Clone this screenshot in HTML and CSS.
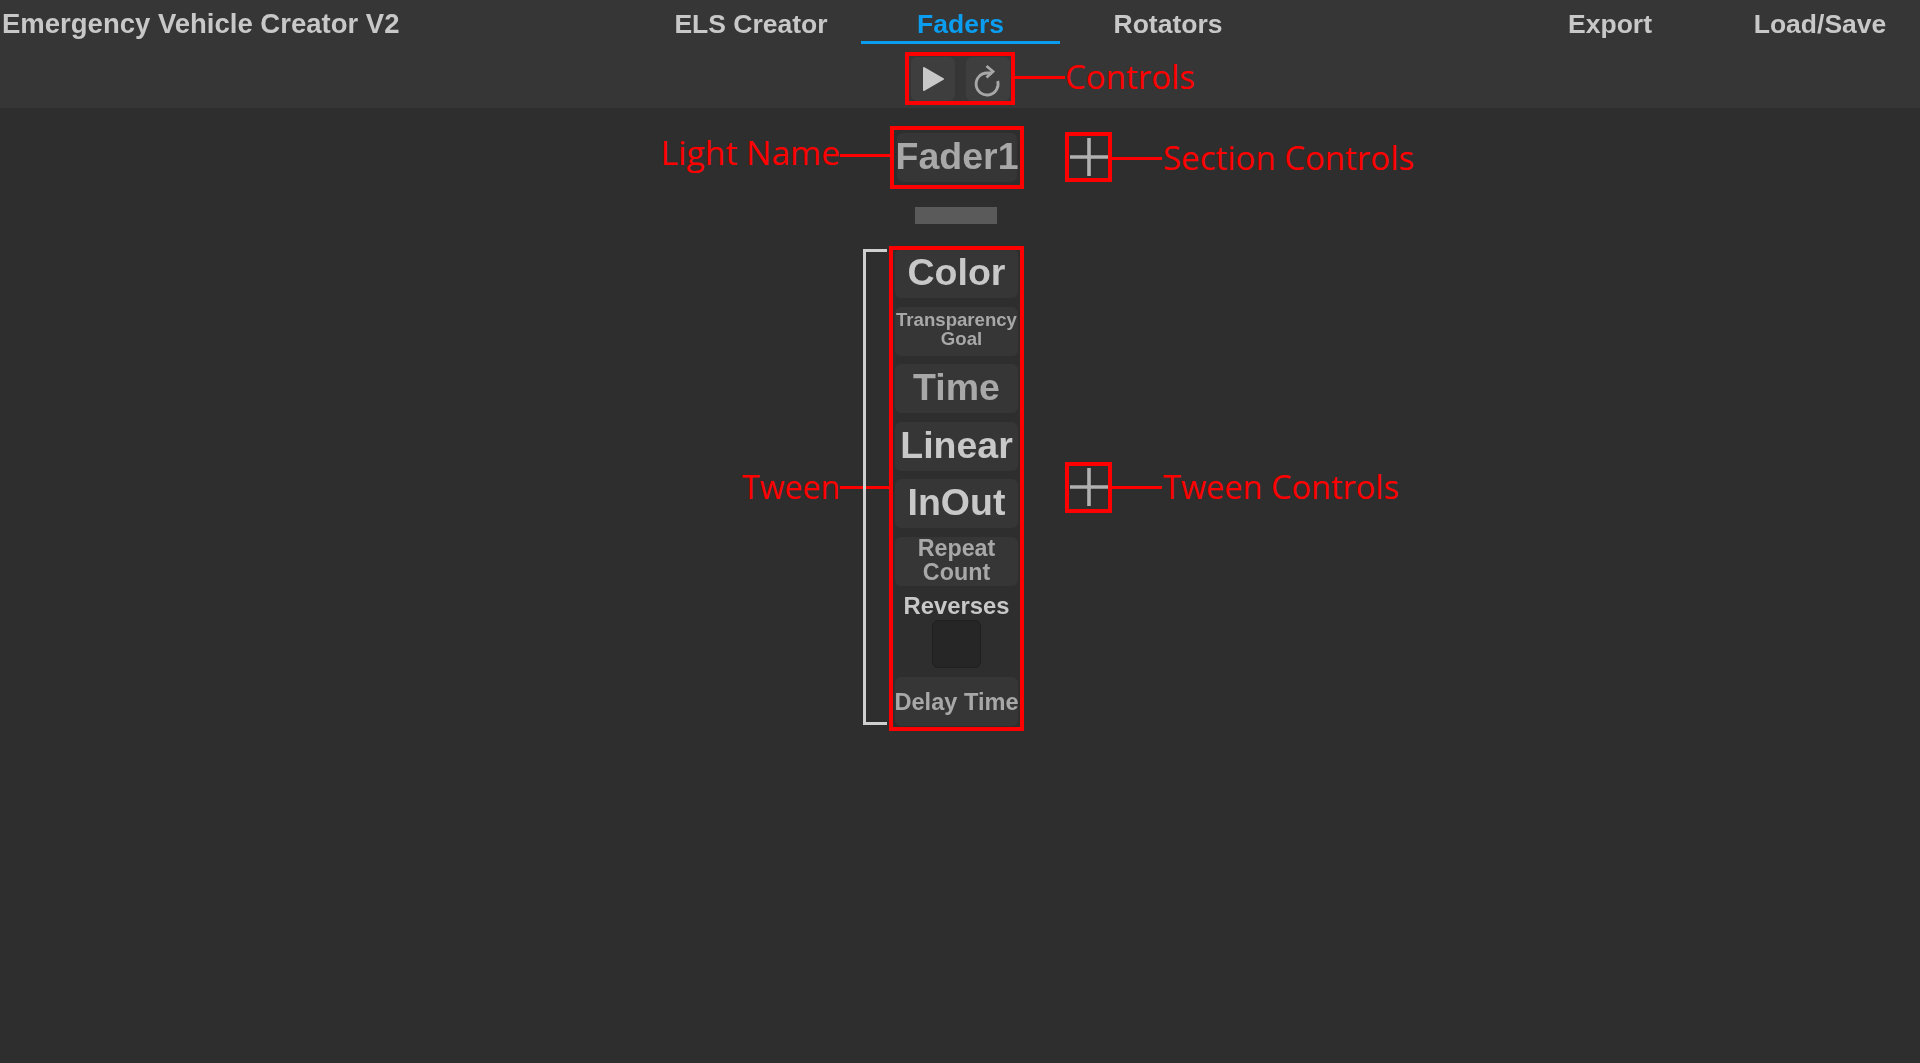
FILE: index.html
```html
<!DOCTYPE html>
<html lang="en">
<head>
    <meta charset="UTF-8">
    <meta name="viewport" content="width=device-width, initial-scale=1.0">
    <title>Emergency Vehicle Creator V2</title>
    <link rel="stylesheet" href="styles.css">
</head>
<body>
    <header class="topbar">
        <nav class="nav-row">
            <div class="app-title">Emergency Vehicle Creator V2</div>
            <div class="tabs">
                <a class="tab">ELS Creator</a>
                <a class="tab active">Faders</a>
                <a class="tab">Rotators</a>
            </div>
            <div class="tabs-right">
                <a class="tab">Export</a>
                <a class="tab">Load/Save</a>
            </div>
        </nav>
        <div class="controls">
            <button class="icon-btn" aria-label="Play">
                <svg width="44" height="44" viewBox="0 0 44 44"><path d="M13 11 L32 22 L13 33 Z" fill="#c8c8c8" stroke="#c8c8c8" stroke-width="2" stroke-linejoin="round"/></svg>
            </button>
            <button class="icon-btn" aria-label="Restart">
                <svg width="44" height="44" viewBox="0 0 44 44"><path d="M31.7 24 A11 11 0 1 1 21 16 H26" fill="none" stroke="#a8a8a8" stroke-width="2.8"/><path d="M20.5 9 L27 14.5 L20.5 20.5" fill="none" stroke="#a8a8a8" stroke-width="2.8"/></svg>
            </button>
        </div>
    </header>

    <main class="editor">
        <div class="cell name-cell placeholder big">Fader1</div>
        <div class="drag-bar"></div>

        <div class="tween">
            <div class="cell big">Color</div>
            <div class="cell small placeholder">Transparency<br><span class="goal">Goal</span></div>
            <div class="cell big placeholder">Time</div>
            <div class="cell big">Linear</div>
            <div class="cell big">InOut</div>
            <div class="cell medium placeholder">Repeat<br>Count</div>
            <div class="reverses">
                <div class="reverses-label">Reverses</div>
                <div class="checkbox"></div>
            </div>
            <div class="cell medium placeholder delay">Delay Time</div>
        </div>
    </main>

    <!-- annotations drawn over the screenshot -->
    <div class="note-box box-controls"></div>
    <div class="note-box box-name"></div>
    <div class="note-box box-section"></div>
    <div class="note-box box-tween"></div>
    <div class="note-box box-tween-ctrl"></div>

    <div class="note-line line-controls"></div>
    <div class="note-line line-name"></div>
    <div class="note-line line-section"></div>
    <div class="note-line line-tween"></div>
    <div class="note-line line-tween-ctrl"></div>

    <span class="note-text text-controls">Controls</span>
    <span class="note-text text-name">Light Name</span>
    <span class="note-text text-section">Section Controls</span>
    <span class="note-text text-tween">Tween</span>
    <span class="note-text text-tween-ctrl">Tween Controls</span>

    <div class="bracket"></div>

    <svg class="plus plus-section" width="40" height="40" viewBox="0 0 40 40"><path d="M1 20 H39 M20 1 V39" stroke="#b0b0b0" stroke-width="3.6"/></svg>
    <svg class="plus plus-tween" width="40" height="40" viewBox="0 0 40 40"><path d="M1 20 H39 M20 1 V39" stroke="#b0b0b0" stroke-width="3.6"/></svg>
</body>
</html>
```

FILE: styles.css
```css
* {
    margin: 0;
    padding: 0;
    box-sizing: border-box;
}

body {
    font-family: 'Liberation Sans', Arial, sans-serif;
    font-weight: bold;
    background-color: #2e2e2e;
    color: #c8c8c8;
    height: 1063px;
    position: relative;
    overflow: hidden;
}

.topbar {
    background-color: #363636;
    height: 108px;
}

/* the capture is slightly soft, same for the UI under the red marks */
.nav-row,
.controls,
.editor,
.plus,
.bracket {
    filter: blur(0.7px);
}

.nav-row {
    display: flex;
    height: 46px;
    font-size: 26.5px;
}

.app-title {
    width: 647px;
    padding: 9px 0 0 2px;
    line-height: 30px;
    font-size: 27.5px;
}

.tabs,
.tabs-right {
    display: flex;
}

.tabs-right {
    margin-left: auto;
}

.tab {
    width: 208px;
    height: 44px;
    padding-top: 9px;
    line-height: 30px;
    text-align: center;
}

.tab.active {
    color: #0b9ef0;
    width: 199px;
    margin: 0 4px 0 6px;
    border-bottom: 3px solid #0b9ef0;
}

.tabs-right .tab {
    width: 210px;
}

.tabs-right .tab:last-child {
    margin-right: -5px;
}

.controls {
    display: flex;
    justify-content: center;
    gap: 11px;
    padding-top: 11px;
}

.icon-btn {
    width: 44px;
    height: 44px;
    background-color: #3e3e3e;
    border: none;
    border-radius: 6px;
    display: flex;
    align-items: center;
    justify-content: center;
}

.editor {
    width: 123px;
    margin-left: 895px;
    padding-top: 25px;
}

.cell {
    height: 49px;
    background-color: #363636;
    border-radius: 6px;
    display: flex;
    flex-direction: column;
    align-items: center;
    justify-content: center;
    text-align: center;
    white-space: nowrap;
}

.name-cell {
    width: 120px;
    margin-left: 2px;
    font-size: 37px;
    padding-bottom: 0;
}

.big {
    font-size: 37.5px;
    padding-bottom: 2px;
}

.medium {
    font-size: 23.3px;
    line-height: 24px;
    padding-bottom: 2px;
}

.small {
    font-size: 18.6px;
    line-height: 19.5px;
    padding-bottom: 4px;
}

.delay {
    padding: 2px 0 0;
    font-size: 23.6px;
}

.placeholder {
    color: #a8a8a8;
}

.goal {
    padding-left: 10px;
}

.drag-bar {
    width: 82px;
    height: 17px;
    margin: 25px 0 25px 20px;
    background-color: #5a5a5a;
}

.tween {
    display: flex;
    flex-direction: column;
    gap: 8.5px;
}

.reverses {
    height: 74px;
    display: flex;
    flex-direction: column;
    align-items: center;
}

.reverses-label {
    font-size: 23.8px;
    line-height: 24px;
    margin-bottom: 2px;
}

.checkbox {
    width: 49px;
    height: 49px;
    background-color: #262626;
    border: 1px solid #1f1f1f;
    border-radius: 6px;
}

/* annotation layer */
.note-box {
    position: absolute;
    border: 4px solid #ff0000;
}

.box-controls { left: 905px; top: 52px; width: 110px; height: 53px; }
.box-name { left: 890px; top: 126px; width: 134px; height: 63px; }
.box-section { left: 1065px; top: 132px; width: 47px; height: 50px; }
.box-tween { left: 889px; top: 246px; width: 135px; height: 485px; }
.box-tween-ctrl { left: 1065px; top: 462px; width: 47px; height: 51px; }

.note-line {
    position: absolute;
    width: 50px;
    height: 3px;
    background-color: #ff0000;
}

.line-controls { left: 1015px; top: 76px; }
.line-name { left: 840px; top: 154px; }
.line-section { left: 1112px; top: 157px; }
.line-tween { left: 840px; top: 486px; }
.line-tween-ctrl { left: 1112px; top: 486px; }

.note-text {
    position: absolute;
    font-family: 'Open Sans', sans-serif;
    font-weight: normal;
    font-size: 33px;
    line-height: 40px;
    color: #ff0000;
    white-space: nowrap;
}

.text-controls { left: 1065px; top: 57px; }
.text-name { right: 1080px; top: 132px; font-size: 33.6px; }
.text-section { left: 1163px; top: 138px; }
.text-tween { right: 1080px; top: 467px; font-size: 32px; }
.text-tween-ctrl { left: 1163px; top: 467px; font-size: 32.5px; }

.bracket {
    position: absolute;
    left: 863px;
    top: 249px;
    width: 24px;
    height: 476px;
    border: 3px solid #cfcfcf;
    border-right: none;
}

.plus {
    position: absolute;
}

.plus-section { left: 1069px; top: 137px; }
.plus-tween { left: 1069px; top: 467px; }
```
